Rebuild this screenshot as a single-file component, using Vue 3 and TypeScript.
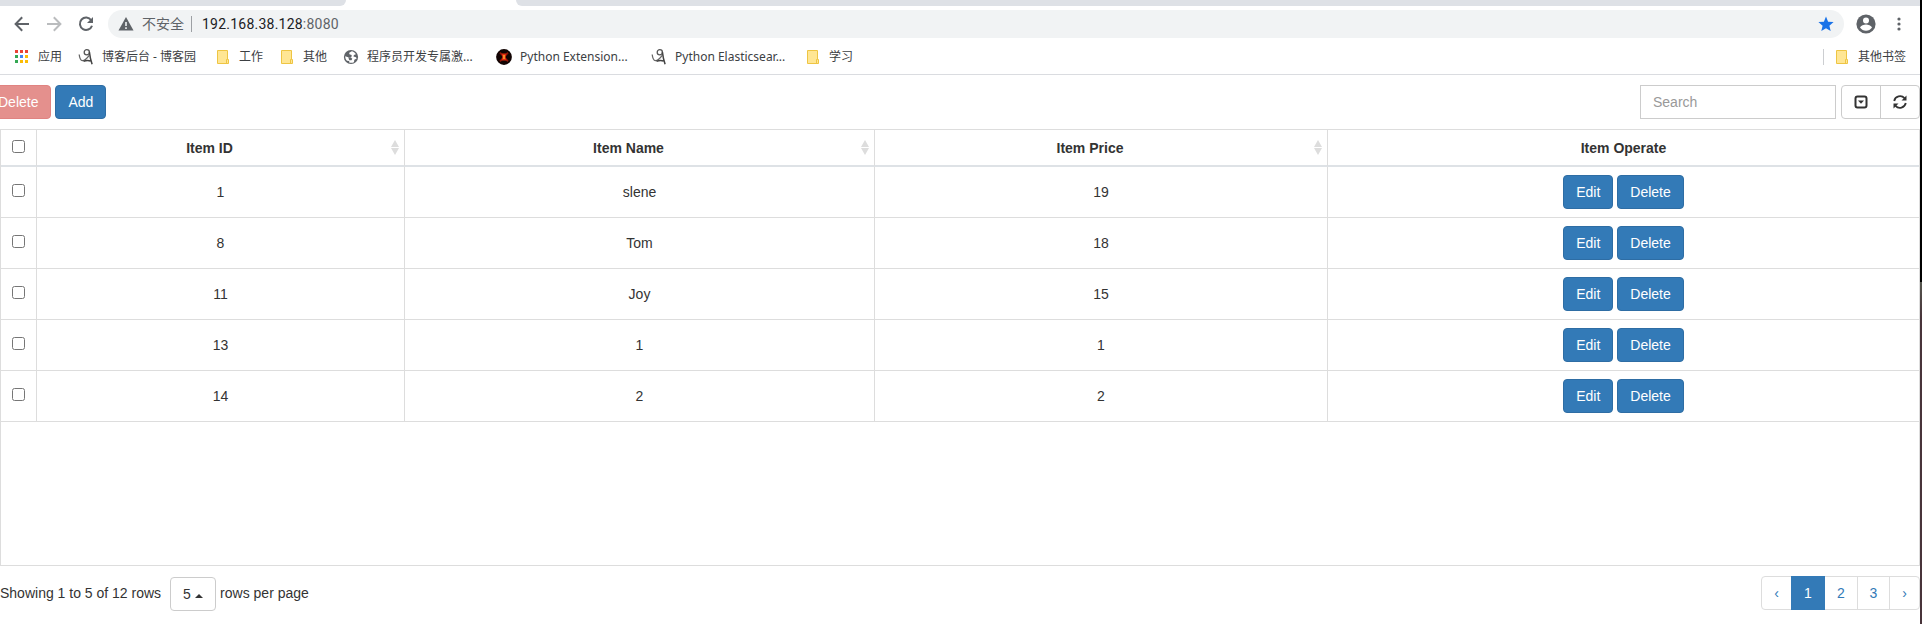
<script setup lang="ts">
interface Item { id: number; name: string; price: number }
const items: Item[] = [
  { id: 1, name: 'slene', price: 19 },
  { id: 8, name: 'Tom', price: 18 },
  { id: 11, name: 'Joy', price: 15 },
  { id: 13, name: '1', price: 1 },
  { id: 14, name: '2', price: 2 },
]
const columns = ['Item ID', 'Item Name', 'Item Price']
const appColors = ['#ea4335', '#ea4335', '#ea4335', '#34a853', '#4285f4', '#fbbc05', '#34a853', '#fbbc05', '#fbbc05']
interface Bookmark { icon: 'apps' | 'blog' | 'folder' | 'globe' | 'red'; label: string; cls: string }
const bookmarks: Bookmark[] = [
  { icon: 'apps', label: '应用', cls: 'b-apps' },
  { icon: 'blog', label: '博客后台 - 博客园', cls: 'b-blog' },
  { icon: 'folder', label: '工作', cls: 'b-work' },
  { icon: 'folder', label: '其他', cls: 'b-other' },
  { icon: 'globe', label: '程序员开发专属激...', cls: 'b-dev' },
  { icon: 'red', label: 'Python Extension...', cls: 'b-ext' },
  { icon: 'blog', label: 'Python Elasticsear...', cls: 'b-es' },
  { icon: 'folder', label: '学习', cls: 'b-study' },
]
</script>

<template>
  <div class="screen">
    <div class="window">
      <div class="tabs"><div class="tab-left"></div><div class="tab-right"></div></div>
      <div class="nav">
        <svg class="back" width="16" height="16" viewBox="0 0 16 16"><path d="M15 8H2M8.2 1.3 1.6 8l6.6 6.7" fill="none" stroke="#5f6368" stroke-width="2" /></svg>
        <svg class="fwd" width="16" height="16" viewBox="0 0 16 16"><path d="M1 8h13M7.8 1.3 14.4 8l-6.6 6.7" fill="none" stroke="#babcbe" stroke-width="2" /></svg>
        <svg class="reload" width="16" height="16" viewBox="0 0 16 16"><path d="M13.2 4.2A6.2 6.2 0 1 0 14 9.7" fill="none" stroke="#5f6368" stroke-width="2" /><path d="M15 1v6H9z" fill="#5f6368" /></svg>
        <div class="omnibox">
          <svg class="warn" width="16" height="14" viewBox="0 0 16 14"><path d="M8 0 15.5 13.5H.5z" fill="#5f6368" /><path d="M8 5v4M8 10.3v1.6" stroke="#f1f3f4" stroke-width="1.6" /></svg>
          <span class="unsafe">不安全</span>
          <span class="sep"></span>
          <span class="url">192.168.38.128<span class="port">:8080</span></span>
          <svg class="star" width="16" height="16" viewBox="0 0 16 16"><path d="m8 .6 2.1 5.1 5.5.4-4.2 3.6 1.3 5.4L8 12.2l-4.7 2.9 1.3-5.4L.4 6.1l5.5-.4z" fill="#1a73e8" /></svg>
        </div>
        <svg class="avatar" width="20" height="20" viewBox="0 0 20 20"><circle cx="10" cy="10" r="9.6" fill="#5f6368" /><circle cx="10" cy="6.5" r="3" fill="#fff" /><path d="M4 13.6c.7-2.1 4-3 6-3s5.3.9 6 3a7.3 7.3 0 0 1-12 0z" fill="#fff" /></svg>
        <svg class="dots" width="4" height="14" viewBox="0 0 4 14"><g fill="#5f6368"><circle cx="2" cy="2" r="1.6" /><circle cx="2" cy="7" r="1.6" /><circle cx="2" cy="12" r="1.6" /></g></svg>
      </div>
      <div class="bookmarks">
        <div v-for="b in bookmarks" :key="b.cls" class="bookmark" :class="b.cls">
          <svg v-if="b.icon === 'apps'" class="bicon" width="16" height="16" viewBox="0 0 16 16"><rect v-for="(c, i) in appColors" :key="i" :x="1 + (i % 3) * 5" :y="1 + Math.floor(i / 3) * 5" width="3" height="3" :fill="c" /></svg>
          <svg v-else-if="b.icon === 'blog'" class="bicon" width="16" height="16" viewBox="0 0 16 16"><path d="M1.2 5.5c.4 3.6 1.6 6 3.2 6.200 2.300.100 4.600-2.400 6.800-5.400" fill="none" stroke="#666" stroke-width="1.300" /><circle cx="8.800" cy="3.300" r="2.600" fill="none" stroke="#555" stroke-width="1.300" /><path d="M11.400 3.200c.5 4.200 1.200 8 2.700 12M5.500 12.300c2.600-1 4.800-1.200 7-.3" fill="none" stroke="#444" stroke-width="1.500" /></svg>
          <svg v-else-if="b.icon === 'folder'" class="bicon" width="16" height="16" viewBox="0 0 16 16"><path d="M2.500 1.500h10v9h1v4h-11z" fill="#ffe694" stroke="#eec543" /><path d="M11.500 14v-3.500h1" fill="none" stroke="#eec543" /></svg>
          <svg v-else-if="b.icon === 'globe'" class="bicon" width="16" height="16" viewBox="0 0 16 16"><circle cx="8" cy="8" r="7.100" fill="#5f6368" /><path d="M8.800 2.300 6.200 3.800l.2 1.500 2.300.7-.3 2.200H5.200L2.200 7.200c0 2 .8 3.500 1.800 4.600l2.200.1v1.700c2 .6 3.800.1 4.800-.7l.3-2.200 2.400-1.200-.7-1.200-2.500-.7.4-1.500 2-.8c-1-1.800-2.600-2.700-4.100-3z" fill="#fff" /><path d="M5.200 8.200h2.300l1.800 1.600-.8 1.500H6.300z" fill="#5f6368" /></svg>
          <svg v-else class="bicon" width="16" height="16" viewBox="0 0 16 16"><circle cx="8" cy="8" r="7.900" fill="#120403" /><path d="m4 3.700 8 8.600M12 3.700l-8 8.600" stroke="#8c1408" stroke-width="1.800" /><path d="M5.500 4.500h5l-1 3.500 1 3.500h-5l1-3.500z" fill="#e32b0c" /><path d="M7.300 6h1.400v4H7.300z" fill="#ffb43a" /></svg>
          <span>{{ b.label }}</span>
        </div>
        <div class="bookmark b-rest">
          <svg class="bicon" width="16" height="16" viewBox="0 0 16 16"><path d="M2.500 1.500h10v9h1v4h-11z" fill="#ffe694" stroke="#eec543" /><path d="M11.500 14v-3.500h1" fill="none" stroke="#eec543" /></svg>
          <span>其他书签</span>
        </div>
      </div>
      <div class="toolbar">
        <button class="btn danger">Delete</button>
        <button class="btn primary">Add</button>
        <input class="search" placeholder="Search" />
        <div class="group">
          <button class="tool"><svg width="14" height="14" viewBox="0 0 14 14"><rect x="1.5" y="1.5" width="11" height="11" rx="2" fill="none" stroke="#333" stroke-width="2" /><path d="M4 5.5h6L7 8.800z" fill="#333" /></svg></button>
          <button class="tool"><svg width="14" height="14" viewBox="0 0 14 14"><path d="M1.200 6A6 6 0 0 1 11.500 3.200M12.800 8A6 6 0 0 1 2.500 10.800" fill="none" stroke="#333" stroke-width="1.800" /><path d="M13.500.5v5h-5zM.5 13.500v-5h5z" fill="#333" /></svg></button>
        </div>
      </div>
      <div class="table-box">
        <table>
          <colgroup><col class="c0" /><col class="c1" /><col class="c2" /><col class="c3" /><col class="c4" /></colgroup>
          <thead>
            <tr>
              <th class="check"><input type="checkbox" /></th>
              <th v-for="c in columns" :key="c"><div class="sortable">{{ c }}<svg class="sort" width="8" height="15" viewBox="0 0 8 15"><path d="M4 0l4 7H0zM0 8h8l-4 7z" fill="#ddd" /></svg></div></th>
              <th>Item Operate</th>
            </tr>
          </thead>
          <tbody>
            <tr v-for="item in items" :key="item.id">
              <td class="check"><input type="checkbox" /></td>
              <td>{{ item.id }}</td>
              <td>{{ item.name }}</td>
              <td>{{ item.price }}</td>
              <td><div class="actions"><button class="btn primary">Edit</button><button class="btn primary">Delete</button></div></td>
            </tr>
          </tbody>
        </table>
      </div>
      <div class="footer">
        <span class="info">Showing 1 to 5 of 12 rows</span>
        <button class="size">5<i class="caret"></i></button>
        <span>rows per page</span>
        <div class="pages">
          <a class="prev">‹</a><a class="active">1</a><a class="after">2</a><a>3</a><a class="next">›</a>
        </div>
      </div>
    </div>
    <div class="edge"><div class="edge-top"></div><div class="edge-bottom"></div></div>
  </div>
</template>

<style>
html, body { background: #fff; overflow: hidden; }
</style>
<style scoped>
.screen { display: flex; width: 1922px; height: 624px; overflow: hidden; font: 14px/20px "Liberation Sans", Arial, sans-serif; color: #333; }
.screen * { box-sizing: border-box; }
.window { width: 1920px; height: 624px; }
.edge { width: 2px; }
.edge-top { height: 282px; background: #000; }
.edge-bottom { height: 342px; background: linear-gradient(#55564e, #48343a 36px); }
.tabs { display: flex; justify-content: space-between; height: 6px; overflow: hidden; }
.tab-left { width: 346px; background: #dee1e6; border-bottom-right-radius: 6px; }
.tab-right { width: 1410px; margin-right: -6px; background: #dee1e6; border-bottom-left-radius: 6px; }
.nav { display: flex; align-items: center; height: 36px; padding-left: 14px; }
.nav svg { flex: none; }
.fwd { margin-left: 16px; }
.reload { margin-left: 16px; }
.omnibox { display: flex; align-items: center; width: 1736px; height: 28px; margin: 0 12px 0 14px; padding-left: 10px; border-radius: 14px; background: #f1f3f4; font: 14px/28px Roboto, "Noto Sans CJK SC", sans-serif; }
.unsafe { margin-left: 8px; width: 44px; color: #5f6368; white-space: nowrap; }
.sep { width: 1px; height: 16px; margin-left: 5px; background: #9da0a4; }
.url { margin-left: 10px; color: #202124; letter-spacing: .23px; }
.port { color: #5f6368; }
.star { margin-left: auto; margin-right: 10px; }
.dots { margin-left: 21px; }
.bookmarks { display: flex; align-items: center; height: 33px; padding: 0 0 2px 14px; border-bottom: 1px solid #dadce0; font: 12px/20px "Noto Sans", "Noto Sans CJK SC", sans-serif; color: #3c4043; }
.bookmark { display: flex; flex: none; align-items: center; height: 28px; white-space: nowrap; }
.bookmark span { margin-left: 8px; }
.b-apps { width: 64px; }
.b-blog { width: 137px; }
.b-work, .b-other { width: 64px; }
.b-dev { width: 153px; }
.b-ext { width: 155px; }
.b-es { width: 154px; }
.b-rest { margin-left: auto; padding-left: 10px; width: 97px; height: 16px; border-left: 1px solid #ccced1; }
.toolbar { display: flex; align-items: center; height: 54px; }
.btn { height: 34px; padding: 0 12px; border: 1px solid #2e6da4; border-radius: 4px; background: #337ab7; color: #fff; font: 14px/20px "Liberation Sans", Arial, sans-serif; }
.danger { margin-left: -15px; background: #e4908d; border-color: #e08381; }
.toolbar .primary { margin-left: 4px; }
.search { width: 196px; height: 34px; margin-left: auto; padding: 6px 12px; border: 1px solid #ccc; border-radius: 0; font: 14px/20px "Liberation Sans", Arial, sans-serif; }
.search::placeholder { color: #999; }
.group { display: flex; margin-left: 5px; border: 1px solid #ccc; border-radius: 4px; width: 79px; height: 34px; }
.tool { display: flex; align-items: center; justify-content: center; width: 38px; padding: 0 1px 0 0; border: 0; background: none; }
.tool + .tool { border-left: 1px solid #ccc; width: 39px; }
.table-box { height: 437px; border: 1px solid #ddd; }
table { width: 1918px; table-layout: fixed; border-collapse: separate; border-spacing: 0; }
.c0 { width: 36px; } .c1 { width: 368px; } .c2 { width: 470px; } .c3 { width: 453px; } .c4 { width: 591px; }
th, td { padding: 0; text-align: center; vertical-align: middle; border-right: 1px solid #ddd; border-bottom: 1px solid #ddd; }
th:last-child, td:last-child { border-right: 0; }
th { height: 37px; border-bottom: 2px solid #dee2e6; }
td { height: 51px; }
.check input { display: block; width: 13px; height: 13px; margin: 0 auto; position: relative; top: -1.5px; }
th.check input { top: -1px; }
.sortable { display: flex; align-items: center; justify-content: center; padding: 0 30px 0 8px; position: relative; }
.sort { position: absolute; right: 5px; top: 2px; }
.actions { display: flex; justify-content: center; gap: 4px; }
.footer { display: flex; align-items: center; height: 54px; }
.size { display: flex; align-items: center; width: 46px; height: 34px; margin: 2px 4px 0 9px; padding: 0 12px; border: 1px solid #ccc; border-radius: 4px; background: #fff; color: #333; font: 14px/20px "Liberation Sans", Arial, sans-serif; }
.caret { margin: 4px 0 0 4px; border: 4px solid transparent; border-top: 0; border-bottom-color: #333; }
.pages { display: flex; margin-left: auto; height: 34px; color: #337ab7; }
.pages a { display: flex; align-items: center; justify-content: center; width: 33px; height: 34px; margin-left: -1px; border: 1px solid #ddd; }
.pages a.prev { width: 31px; border-radius: 4px 0 0 4px; }
.pages a.next { width: 31px; border-radius: 0 4px 4px 0; }
.pages a.active { width: 34px; background: #337ab7; border-color: #337ab7; color: #fff; z-index: 1; }
.pages a.after { width: 34px; }
</style>
